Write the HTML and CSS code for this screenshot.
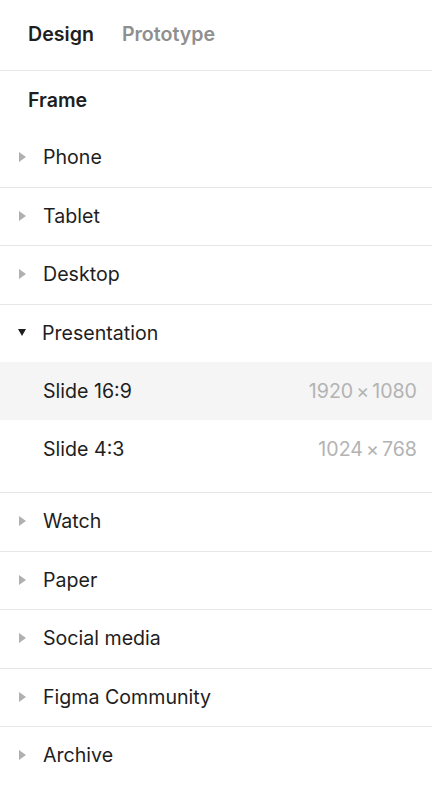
FILE: index.html
```html
<!DOCTYPE html>
<html lang="en">
<head>
<meta charset="utf-8">
<title>Design panel</title>
<link rel="stylesheet" href="styles.css">
</head>
<body>
<div class="panel">
  <div class="tabs">
    <span class="tab active">Design</span>
    <span class="tab">Prototype</span>
  </div>
  <div class="section-title">Frame</div>
  <div class="group"><div class="row"><span class="caret"></span><span class="label">Phone</span></div></div>
  <div class="group"><div class="row"><span class="caret"></span><span class="label">Tablet</span></div></div>
  <div class="group"><div class="row"><span class="caret"></span><span class="label">Desktop</span></div></div>
  <div class="group open">
    <div class="row"><span class="caret down"></span><span class="label">Presentation</span></div>
    <div class="sub selected"><span class="label">Slide 16:9</span><span class="dim">1920<span class="x">×</span>1080</span></div>
    <div class="sub"><span class="label">Slide 4:3</span><span class="dim">1024<span class="x">×</span>768</span></div>
  </div>
  <div class="group"><div class="row"><span class="caret"></span><span class="label">Watch</span></div></div>
  <div class="group"><div class="row"><span class="caret"></span><span class="label">Paper</span></div></div>
  <div class="group"><div class="row"><span class="caret"></span><span class="label">Social media</span></div></div>
  <div class="group"><div class="row"><span class="caret"></span><span class="label">Figma Community</span></div></div>
  <div class="group last"><div class="row"><span class="caret"></span><span class="label">Archive</span></div></div>
</div>
</body>
</html>
```

FILE: styles.css
```css
* { box-sizing: border-box; }
html, body {
  margin: 0;
  padding: 0;
  background: #ffffff;
}
body {
  font-family: Inter, "Noto Sans", sans-serif;
  color: #1e1e1e;
  font-size: 19.6px;
}
.panel {
  width: 432px;
}
.tabs {
  display: flex;
  align-items: center;
  gap: 28px;
  height: 71px;
  padding: 0 0 2px 28px;
  border-bottom: 1px solid #e6e6e6;
}
.tab {
  font-weight: 600;
  color: #8f8f8f;
}
.tab.active {
  color: #1e1e1e;
}
.section-title {
  height: 58px;
  display: flex;
  align-items: center;
  padding: 0 0 1px 28px;
  font-weight: 600;
}
.group {
  border-bottom: 1px solid #e6e6e6;
}
.group.open {
  padding-bottom: 14px;
}
.group.last {
  border-bottom: none;
}
.row {
  height: 57.5px;
  display: flex;
  align-items: center;
  padding: 0 0 1px 19px;
}
.caret {
  flex: none;
  width: 0;
  height: 0;
  border-top: 5px solid transparent;
  border-bottom: 5px solid transparent;
  border-left: 7px solid #b0b0b0;
  margin-right: 17px;
}
.caret.down {
  border-left: 4.5px solid transparent;
  border-right: 4.5px solid transparent;
  border-top: 7px solid #1e1e1e;
  border-bottom: none;
  margin-left: -1px;
  margin-right: 16px;
}
.sub {
  height: 58px;
  display: flex;
  align-items: center;
  justify-content: space-between;
  padding: 0 15px 1px 43px;
}
.sub.selected {
  background: #f5f5f5;
}
.dim {
  color: #b3b3b3;
}
.x {
  margin: 0 3px;
}
```
